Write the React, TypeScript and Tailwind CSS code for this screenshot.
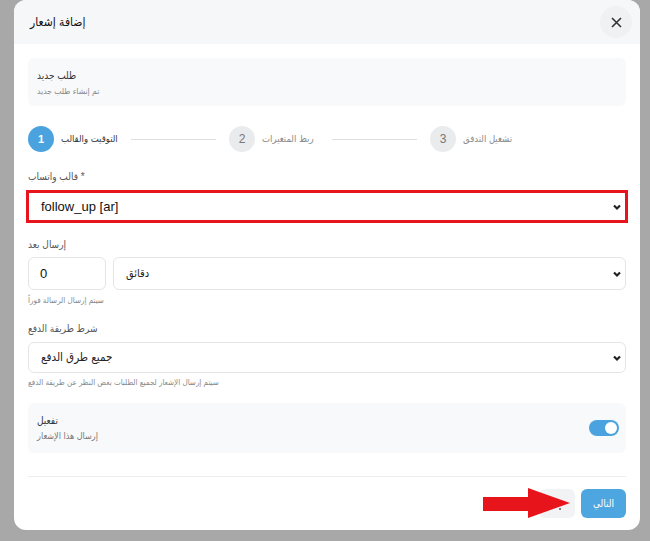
import React from "react";

const steps = [
  { n: 1, label: "التوقيت والقالب", active: true },
  { n: 2, label: "ربط المتغيرات", active: false },
  { n: 3, label: "تشغيل التدفق", active: false },
];

const Chevron = () => (
  <svg width="10" height="8" viewBox="0 0 10 8" className="shrink-0">
    <polyline points="2,2.5 5,5.5 8,2.5" fill="none" stroke="#222" strokeWidth="2.2" />
  </svg>
);

const App: React.FC = () => {
  return (
    <div className="w-full h-[541px] bg-[#a8a8a8] overflow-hidden font-['Liberation_Sans','DejaVu_Sans_Condensed','DejaVu_Sans',sans-serif]">
      <div className="relative ml-[14px] w-[626px] h-[530px] bg-white rounded-xl flex flex-col overflow-hidden">
        {/* header */}
        <div className="h-[44px] shrink-0 bg-[#f6f7f8] flex items-center justify-between pl-4 pr-[8px]">
          <span className="text-[12px] text-[#111]">إضافة إشعار</span>
          <button className="w-[32px] h-[32px] rounded-full bg-[#f0f1f2] flex items-center justify-center">
            <svg width="11" height="11" viewBox="0 0 11 11">
              <path d="M1 1 L10 10 M10 1 L1 10" stroke="#333" strokeWidth="1.6" />
            </svg>
          </button>
        </div>

        <div className="px-[14px] pt-[14px] flex flex-col">
          {/* order card */}
          <div className="h-[48px] bg-[#f8f9fa] rounded-md px-[9px] pt-[11px] flex flex-col gap-[3px]">
            <span className="text-[10px] leading-[14px] text-[#333]">طلب جديد</span>
            <span className="text-[8.5px] leading-[11px] text-[#888]">تم إنشاء طلب جديد</span>
          </div>

          {/* steps */}
          <div className="flex items-center mt-[20px] h-[26px]">
            {steps.map((s, i) => (
              <React.Fragment key={s.n}>
                {i > 0 && <div className="w-[85px] h-px bg-[#dcdfe2] ml-[15px] mr-[13px]" />}
                <div className="flex items-center gap-[7px]">
                  <div
                    className={
                      s.active
                        ? "w-[26px] h-[26px] rounded-full bg-[#4aa3df] text-white text-[11px] font-bold flex items-center justify-center"
                        : "w-[26px] h-[26px] rounded-full bg-[#e9ebed] text-[#777] text-[12px] flex items-center justify-center"
                    }
                  >
                    {s.n}
                  </div>
                  <span
                    className={
                      s.active
                        ? "w-[55px] whitespace-nowrap text-[9.5px] text-[#333]"
                        : "w-[55px] whitespace-nowrap text-[9.5px] text-[#888]"
                    }
                  >
                    {s.label}
                  </span>
                </div>
              </React.Fragment>
            ))}
          </div>

          {/* template */}
          <label className="mt-[18px] text-[10px] leading-[14px] text-[#555]">قالب واتساب *</label>
          <div className="-mx-[2px] mt-[6px] h-[33px] border-[3px] border-[#e8141c] bg-white flex items-center justify-between pl-[12px] pr-[3px]">
            <span className="text-[13px] text-[#111]">follow_up [ar]</span>
            <Chevron />
          </div>

          {/* send after */}
          <label className="mt-[15px] text-[10px] leading-[14px] text-[#555]">إرسال بعد</label>
          <div className="flex gap-[7px] mt-[5px]">
            <div className="w-[78px] h-[33px] border border-[#e3e5e8] rounded-md flex items-center pl-[11px] text-[13px] text-[#111]">
              0
            </div>
            <div className="flex-1 h-[33px] border border-[#e3e5e8] rounded-md flex items-center justify-between pl-[12px] pr-[3px]">
              <span className="text-[11px] text-[#222]">دقائق</span>
              <Chevron />
            </div>
          </div>
          <span className="mt-[5px] text-[8px] leading-[12px] text-[#888]">سيتم إرسال الرسالة فوراً</span>

          {/* payment */}
          <label className="mt-[15px] text-[10px] leading-[14px] text-[#555]">شرط طريقة الدفع</label>
          <div className="mt-[6px] h-[31px] border border-[#e3e5e8] rounded-md flex items-center justify-between pl-[12px] pr-[3px]">
            <span className="text-[11.5px] text-[#222]">جميع طرق الدفع</span>
            <Chevron />
          </div>
          <span className="mt-[4px] text-[8px] leading-[12px] text-[#888]">
            سيتم إرسال الإشعار لجميع الطلبات بغض النظر عن طريقة الدفع
          </span>

          {/* enable card */}
          <div className="mt-[14px] h-[50px] bg-[#f8f9fa] rounded-md flex items-center justify-between pl-[9px] pr-[7px]">
            <div className="flex flex-col gap-[3px]">
              <span className="text-[10px] leading-[13px] text-[#333]">تفعيل</span>
              <span className="text-[9px] leading-[12px] text-[#777]">إرسال هذا الإشعار</span>
            </div>
            <div className="w-[30px] h-[16px] rounded-full bg-[#4aa3df] flex items-center justify-end pr-[2px]">
              <div className="w-[12px] h-[12px] rounded-full bg-white" />
            </div>
          </div>

          {/* footer */}
          <div className="mt-[23px] border-t border-[#eceef0] pt-[12px] flex justify-end gap-[6px]">
            <div className="w-[36px] h-[29px] rounded-md bg-[#f1f3f5] flex items-end justify-end pr-[14px] pb-[8px]">
              <span className="w-[2px] h-[2px] bg-[#555] rounded-full" />
            </div>
            <button className="w-[45px] h-[29px] rounded-md bg-[#4ea6e0] text-white text-[10px]">التالي</button>
          </div>
        </div>

        {/* red annotation arrow */}
        <svg className="absolute left-[469px] top-[488px]" width="90" height="32" viewBox="0 0 90 32">
          <rect x="0" y="9" width="48" height="14" fill="#e8141c" />
          <polygon points="45,0 87,15 45,30" fill="#e8141c" />
        </svg>
      </div>
    </div>
  );
};

export default App;
